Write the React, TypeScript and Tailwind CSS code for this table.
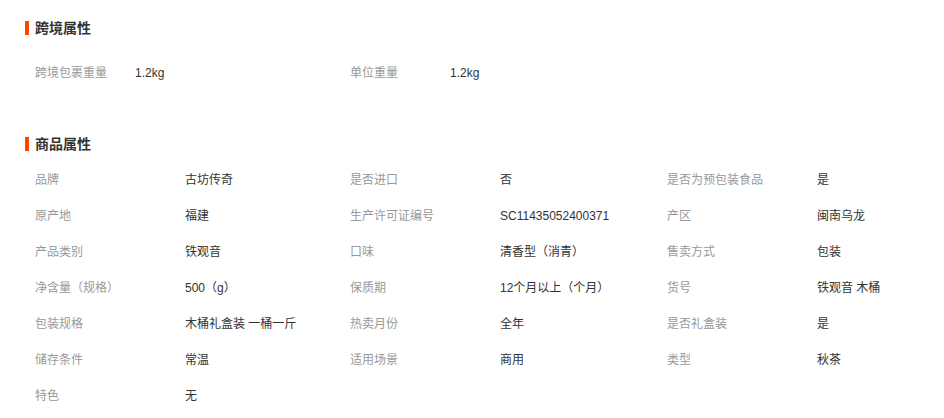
const crossBorder = [
  { label: "跨境包裹重量", value: "1.2kg" },
  { label: "单位重量", value: "1.2kg" },
];

const productAttrs = [
  { label: "品牌", value: "古坊传奇" },
  { label: "是否进口", value: "否" },
  { label: "是否为预包装食品", value: "是" },
  { label: "原产地", value: "福建" },
  { label: "生产许可证编号", value: "SC11435052400371" },
  { label: "产区", value: "闽南乌龙" },
  { label: "产品类别", value: "铁观音" },
  { label: "口味", value: "清香型（消青）" },
  { label: "售卖方式", value: "包装" },
  { label: "净含量（规格）", value: "500（g）" },
  { label: "保质期", value: "12个月以上（个月）" },
  { label: "货号", value: "铁观音 木桶" },
  { label: "包装规格", value: "木桶礼盒装 一桶一斤" },
  { label: "热卖月份", value: "全年" },
  { label: "是否礼盒装", value: "是" },
  { label: "储存条件", value: "常温" },
  { label: "适用场景", value: "商用" },
  { label: "类型", value: "秋茶" },
  { label: "特色", value: "无" },
];

function SectionTitle({ children }: { children: string }) {
  return (
    <div className="flex h-[18px] items-center">
      <span className="h-[14px] w-[4px] bg-[#ff4400]" />
      <h2 className="ml-[6px] text-[14px] font-bold leading-[18px] text-[#333]">
        {children}
      </h2>
    </div>
  );
}

export default function App() {
  return (
    <div
      className="min-h-[418px] w-[944px] bg-white pl-[25px] pt-[19px]"
      style={{ fontFamily: '"Liberation Sans", "Noto Sans CJK SC", sans-serif' }}
    >
      <SectionTitle>跨境属性</SectionTitle>
      <div className="mt-[18px] grid grid-cols-[315px_315px] pl-[10px]">
        {crossBorder.map((item) => (
          <div key={item.label} className="flex h-[36px] items-center text-[12px]">
            <span className="w-[100px] text-[#999]">{item.label}</span>
            <span className="text-[#333]">{item.value}</span>
          </div>
        ))}
      </div>

      <div className="mt-[44px]">
        <SectionTitle>商品属性</SectionTitle>
      </div>
      <div className="mt-[9px] grid grid-cols-[315px_317px_300px] pl-[10px]">
        {productAttrs.map((item) => (
          <div key={item.label} className="flex h-[36px] items-center text-[12px]">
            <span className="w-[150px] text-[#999]">{item.label}</span>
            <span className="text-[#333]">{item.value}</span>
          </div>
        ))}
      </div>
    </div>
  );
}
